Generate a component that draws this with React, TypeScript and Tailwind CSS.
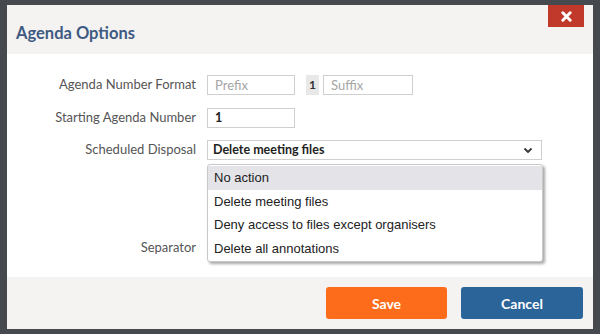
import React from 'react'

const labelCls = 'w-[200px] shrink-0 pr-[11px] text-right text-[13px] text-[#555]'
const inputCls = 'h-[20px] border border-[#cfcfcf] bg-white px-[7px] leading-[18px]'

const options = ['No action', 'Delete meeting files', 'Deny access to files except organisers', 'Delete all annotations']

export default function App() {
  return (
    <div className="flex h-[334px] w-[600px] bg-[#46494e] pt-[5px] pr-[7px] pb-[5px] pl-[7px] font-['Lato',sans-serif]">
      <div className="relative flex flex-1 flex-col">
        {/* header */}
        <div className="flex h-[49px] items-start justify-between bg-[#f4f3f1] pr-[9px] pl-[9px]">
          <h2 className="pt-[17px] text-[16.5px] font-bold leading-[22px] text-[#3f5a82]">Agenda Options</h2>
          <button className="flex h-[22px] w-[36px] items-center justify-center bg-[#c0392b]">
            <svg width="11" height="11" viewBox="0 0 12 12">
              <path d="M2 2 L10 10 M10 2 L2 10" stroke="white" strokeWidth="3.2" strokeLinecap="round" />
            </svg>
          </button>
        </div>

        {/* body */}
        <div className="flex flex-1 flex-col gap-[12.5px] bg-white pt-[21px]">
          <div className="flex h-[20px] items-center">
            <span className={labelCls}>Agenda Number Format</span>
            <div className="flex items-center gap-[11px]">
              <div className={`${inputCls} w-[88px] text-[13px] text-[#a5a5a5]`}>Prefix</div>
              <div className="flex h-[20px] w-[13px] items-center justify-center bg-[#e8e8e8] text-[12px] font-bold text-[#333]">1</div>
              <div className={`${inputCls} -ml-[7px] w-[90px] text-[13px] text-[#a5a5a5]`}>Suffix</div>
            </div>
          </div>
          <div className="flex h-[20px] items-center">
            <span className={labelCls}>Starting Agenda Number</span>
            <div className={`${inputCls} w-[88px] text-[12.5px] font-bold text-[#222]`}>1</div>
          </div>
          <div className="flex h-[20px] items-center">
            <span className={labelCls}>Scheduled Disposal</span>
            <div className={`${inputCls} flex w-[335px] items-center justify-between pr-[8px] pl-[5px] text-[12.5px] font-bold text-[#222]`}>
              <span>Delete meeting files</span>
              <svg width="10" height="7" viewBox="0 0 10 7">
                <path d="M1.5 1.5 L5 5 L8.5 1.5" fill="none" stroke="#333" strokeWidth="1.8" />
              </svg>
            </div>
          </div>
          <div className="h-[20px]" />
          <div className="h-[20px]" />
          <div className="flex h-[20px] items-center">
            <span className={labelCls}>Separator</span>
          </div>
        </div>

        {/* footer */}
        <div className="flex h-[52px] items-center justify-end gap-[14px] bg-[#f4f3f1] pr-[10px]">
          <button className="h-[32px] w-[121px] rounded-[3px] bg-[#fd6c1b] text-[14px] font-bold text-white">Save</button>
          <button className="h-[32px] w-[122px] rounded-[3px] bg-[#2b6499] text-[14px] font-bold text-white">Cancel</button>
        </div>

        {/* open select list */}
        <div className="absolute top-[159px] left-[200px] w-[336px] rounded-[3px] border border-[#c9c9c9] bg-white py-[1px] font-['Liberation_Sans',sans-serif] shadow-[2px_2px_3px_rgba(0,0,0,0.35)]">
          {options.map((o, i) => (
            <div
              key={o}
              className={`h-[23.5px] px-[6px] text-[13px] leading-[23.5px] text-[#222] ${i === 0 ? 'bg-[#e4e4e8]' : ''}`}
            >
              {o}
            </div>
          ))}
        </div>
      </div>
    </div>
  )
}
